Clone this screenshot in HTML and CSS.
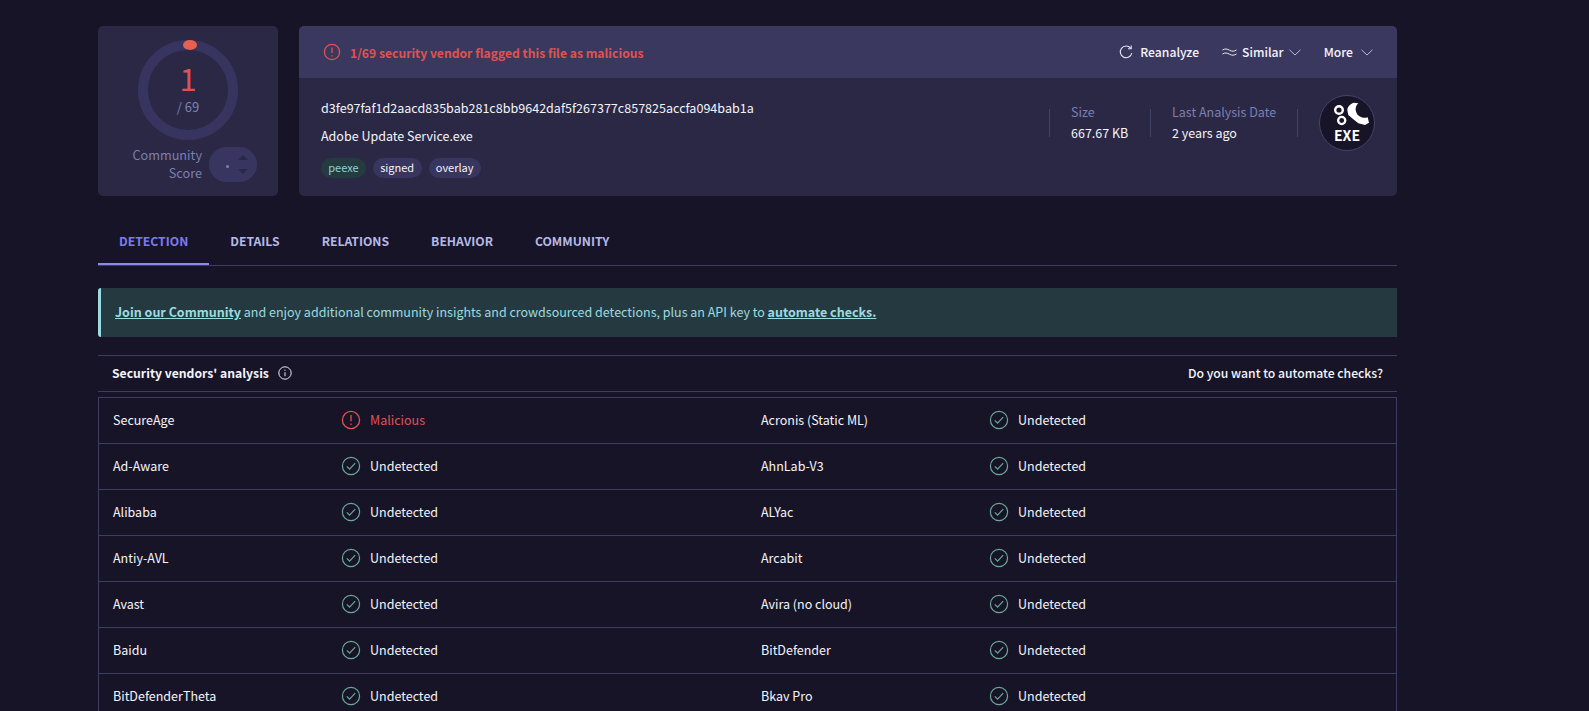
FILE: index.html
```html
<!DOCTYPE html>
<html lang="en">
<head>
  <meta charset="UTF-8" />
  <title>VirusTotal - File</title>
  <link rel="stylesheet" href="styles.css">
</head>
<body>
  <div class="page">

    <div class="summary">
      <div class="score-card">
        <div class="ring">
          <svg class="ring-svg" width="100" height="100" viewBox="0 0 100 100">
            <circle cx="50" cy="50" r="45" fill="none" stroke="#373560" stroke-width="10" />
            <ellipse cx="52" cy="5" rx="7" ry="5" fill="#e8604f" />
          </svg>
          <div class="ring-num">1</div>
          <div class="ring-total">/ 69</div>
        </div>
        <div class="community">
          <div class="community-label">Community<br>Score</div>
          <div class="community-pill">
            <span class="pill-dot"></span>
            <span class="pill-arrows">
              <svg width="10" height="19" viewBox="0 0 10 19">
                <path d="M0 5 5 0l5 5zM0 14l5 5 5-5z" />
              </svg>
            </span>
          </div>
        </div>
      </div>

      <div class="file-card">
        <div class="file-head">
          <div class="flag">
            <svg width="18" height="18" viewBox="0 0 18 18" fill="none" stroke="#e05252" stroke-width="1.3">
              <circle cx="9" cy="9" r="7.6" />
              <path d="M9 4.6v5.4M9 12.2v1.4" />
            </svg>
            <span>1/69 security vendor flagged this file as malicious</span>
          </div>
          <div class="actions">
            <a class="action action-re">
              <svg width="14" height="14" viewBox="0 0 14 14" fill="none" stroke="#e8e8f2" stroke-width="1.1">
                <path d="M11.6 3.2A5.8 5.8 0 1 0 12.8 8" />
                <path d="M12.2 .6v3.2H9" />
              </svg>
              <span>Reanalyze</span>
            </a>
            <a class="action action-sim">
              <svg width="15" height="10" viewBox="0 0 15 10" fill="none" stroke="#e8e8f2" stroke-width="1">
                <path d="M.5 3C3 1.500 5 1.800 7.500 3.200S12 4.500 14.500 3M.5 7C3 5.500 5 5.800 7.500 7.200S12 8.500 14.500 7" />
              </svg>
              <span>Similar</span>
              <svg class="chev" width="12" height="7" viewBox="0 0 12 7" fill="none" stroke="#b9b8d6" stroke-width="1">
                <path d="M.5 .8 6 6l5.5-5.2" />
              </svg>
            </a>
            <a class="action action-more">
              <span>More</span>
              <svg class="chev" width="12" height="7" viewBox="0 0 12 7" fill="none" stroke="#b9b8d6" stroke-width="1">
                <path d="M.5 .8 6 6l5.5-5.2" />
              </svg>
            </a>
          </div>
        </div>
        <div class="file-body">
          <div class="file-info">
            <div class="hash">d3fe97faf1d2aacd835bab281c8bb9642daf5f267377c857825accfa094bab1a</div>
            <div class="file-name">Adobe Update Service.exe</div>
            <div class="tags">
              <span class="tag tag-green">peexe</span>
              <span class="tag">signed</span>
              <span class="tag">overlay</span>
            </div>
          </div>
          <div class="meta meta-size">
            <div class="meta-label">Size</div>
            <div class="meta-value">667.67 KB</div>
          </div>
          <div class="meta meta-date">
            <div class="meta-label">Last Analysis Date</div>
            <div class="meta-value">2 years ago</div>
          </div>
          <div class="exe-wrap">
            <div class="exe">
              <svg width="46" height="24" viewBox="1324 102 46 24">
                <g fill="none" stroke="#fff">
                  <circle cx="1339" cy="110" r="3.800" stroke-width="2.400" />
                  <circle cx="1341.700" cy="120.500" r="3.600" stroke-width="2.300" />
                </g>
                <path d="M1353.300 102.700C1349.500 104.500 1347.300 107 1347.300 110L1348.300 115 1353.300 119.300 1358.300 123.300 1365 125 1369 122.700 1367.700 117.300C1365.500 118 1363.500 118 1361.700 117.300 1359 116.500 1357.300 115 1356.700 113.300 1355.700 111 1355.500 109.500 1355.700 108.300 1356 106 1357 104.500 1358.300 103.300z" fill="#fff" />
              </svg>
              <span class="exe-text">EXE</span>
            </div>
          </div>
        </div>
      </div>
    </div>

    <div class="tabs">
      <a class="tab active">DETECTION</a>
      <a class="tab">DETAILS</a>
      <a class="tab">RELATIONS</a>
      <a class="tab">BEHAVIOR</a>
      <a class="tab">COMMUNITY</a>
    </div>

    <div class="banner">
      <a class="banner-link">Join our Community</a>&nbsp;and enjoy additional community insights and crowdsourced detections, plus an API key to&nbsp;<a class="banner-link">automate checks.</a>
    </div>

    <div class="section-head">
      <div class="section-title">
        <span>Security vendors' analysis</span>
        <svg width="14" height="14" viewBox="0 0 14 14" fill="none" stroke="#e8e8f2" stroke-width="1">
          <circle cx="7" cy="7" r="6.2" />
          <path d="M7 6.200v4M7 3.600v1.200" />
        </svg>
      </div>
      <div class="section-link">Do you want to automate checks?</div>
    </div>

    <div class="vendors">
      <div class="vendor-row">
        <div class="vendor-name">SecureAge</div>
        <div class="vendor-status bad">
          <svg width="20" height="20" viewBox="0 0 20 20" fill="none" stroke="#e05252" stroke-width="1.3"><circle cx="10" cy="10" r="8.6" /><path d="M10 5v6.200M10 13.400V15" /></svg>
          <span>Malicious</span>
        </div>
        <div class="vendor-name">Acronis (Static ML)</div>
        <div class="vendor-status">
          <svg width="20" height="20" viewBox="0 0 20 20" fill="none" stroke="#6aa898" stroke-width="1.2"><circle cx="10" cy="10" r="8.6" /><path d="m5.800 10.400 2.800 2.800 5.600-6" /></svg>
          <span>Undetected</span>
        </div>
      </div>
      <div class="vendor-row">
        <div class="vendor-name">Ad-Aware</div>
        <div class="vendor-status">
          <svg width="20" height="20" viewBox="0 0 20 20" fill="none" stroke="#6aa898" stroke-width="1.2"><circle cx="10" cy="10" r="8.6" /><path d="m5.800 10.400 2.800 2.800 5.600-6" /></svg>
          <span>Undetected</span>
        </div>
        <div class="vendor-name">AhnLab-V3</div>
        <div class="vendor-status">
          <svg width="20" height="20" viewBox="0 0 20 20" fill="none" stroke="#6aa898" stroke-width="1.2"><circle cx="10" cy="10" r="8.6" /><path d="m5.800 10.400 2.800 2.800 5.600-6" /></svg>
          <span>Undetected</span>
        </div>
      </div>
      <div class="vendor-row">
        <div class="vendor-name">Alibaba</div>
        <div class="vendor-status">
          <svg width="20" height="20" viewBox="0 0 20 20" fill="none" stroke="#6aa898" stroke-width="1.2"><circle cx="10" cy="10" r="8.6" /><path d="m5.800 10.400 2.800 2.800 5.600-6" /></svg>
          <span>Undetected</span>
        </div>
        <div class="vendor-name">ALYac</div>
        <div class="vendor-status">
          <svg width="20" height="20" viewBox="0 0 20 20" fill="none" stroke="#6aa898" stroke-width="1.2"><circle cx="10" cy="10" r="8.6" /><path d="m5.800 10.400 2.800 2.800 5.600-6" /></svg>
          <span>Undetected</span>
        </div>
      </div>
      <div class="vendor-row">
        <div class="vendor-name">Antiy-AVL</div>
        <div class="vendor-status">
          <svg width="20" height="20" viewBox="0 0 20 20" fill="none" stroke="#6aa898" stroke-width="1.2"><circle cx="10" cy="10" r="8.6" /><path d="m5.800 10.400 2.800 2.800 5.600-6" /></svg>
          <span>Undetected</span>
        </div>
        <div class="vendor-name">Arcabit</div>
        <div class="vendor-status">
          <svg width="20" height="20" viewBox="0 0 20 20" fill="none" stroke="#6aa898" stroke-width="1.2"><circle cx="10" cy="10" r="8.6" /><path d="m5.800 10.400 2.800 2.800 5.600-6" /></svg>
          <span>Undetected</span>
        </div>
      </div>
      <div class="vendor-row">
        <div class="vendor-name">Avast</div>
        <div class="vendor-status">
          <svg width="20" height="20" viewBox="0 0 20 20" fill="none" stroke="#6aa898" stroke-width="1.2"><circle cx="10" cy="10" r="8.6" /><path d="m5.800 10.400 2.800 2.800 5.600-6" /></svg>
          <span>Undetected</span>
        </div>
        <div class="vendor-name">Avira (no cloud)</div>
        <div class="vendor-status">
          <svg width="20" height="20" viewBox="0 0 20 20" fill="none" stroke="#6aa898" stroke-width="1.2"><circle cx="10" cy="10" r="8.6" /><path d="m5.800 10.400 2.800 2.800 5.600-6" /></svg>
          <span>Undetected</span>
        </div>
      </div>
      <div class="vendor-row">
        <div class="vendor-name">Baidu</div>
        <div class="vendor-status">
          <svg width="20" height="20" viewBox="0 0 20 20" fill="none" stroke="#6aa898" stroke-width="1.2"><circle cx="10" cy="10" r="8.6" /><path d="m5.800 10.400 2.800 2.800 5.600-6" /></svg>
          <span>Undetected</span>
        </div>
        <div class="vendor-name">BitDefender</div>
        <div class="vendor-status">
          <svg width="20" height="20" viewBox="0 0 20 20" fill="none" stroke="#6aa898" stroke-width="1.2"><circle cx="10" cy="10" r="8.6" /><path d="m5.800 10.400 2.800 2.800 5.600-6" /></svg>
          <span>Undetected</span>
        </div>
      </div>
      <div class="vendor-row">
        <div class="vendor-name">BitDefenderTheta</div>
        <div class="vendor-status">
          <svg width="20" height="20" viewBox="0 0 20 20" fill="none" stroke="#6aa898" stroke-width="1.2"><circle cx="10" cy="10" r="8.6" /><path d="m5.800 10.400 2.800 2.800 5.600-6" /></svg>
          <span>Undetected</span>
        </div>
        <div class="vendor-name">Bkav Pro</div>
        <div class="vendor-status">
          <svg width="20" height="20" viewBox="0 0 20 20" fill="none" stroke="#6aa898" stroke-width="1.2"><circle cx="10" cy="10" r="8.6" /><path d="m5.800 10.400 2.800 2.800 5.600-6" /></svg>
          <span>Undetected</span>
        </div>
      </div>
    </div>

  </div>
</body>
</html>
```

FILE: styles.css
```css
html, body {
  margin: 0;
  padding: 0;
  height: 711px;
  overflow: hidden;
  background-color: #171428;
  color: #f4f4fa;
  font-family: "Noto Sans CJK JP", "Noto Sans", sans-serif;
  font-size: 12.5px;
}

.page {
  width: 1299px;
  margin-left: 98px;
  padding-top: 26px;
}

.summary {
  display: flex;
  gap: 21px;
  height: 170px;
}

.score-card {
  width: 180px;
  flex-shrink: 0;
  background-color: #2a2845;
  border-radius: 5px;
  display: flex;
  flex-direction: column;
  align-items: center;
  padding-top: 14px;
  box-sizing: border-box;
}

.ring {
  position: relative;
  width: 100px;
  height: 100px;
  text-align: center;
}

.ring-svg {
  position: absolute;
  left: 0;
  top: 0;
}

.ring-num {
  padding-top: 20px;
  font-size: 31px;
  line-height: 36px;
  color: #e05252;
}

.ring-total {
  margin-top: 2px;
  font-size: 13px;
  line-height: 18px;
  color: #7d7fb2;
}

.community {
  display: flex;
  align-items: center;
  gap: 7px;
  margin-top: 7px;
  width: 100%;
  padding-left: 12px;
  box-sizing: border-box;
  justify-content: flex-start;
}

.community-label {
  width: 92px;
  text-align: right;
  color: #7d7fb2;
  font-size: 12.7px;
  line-height: 18px;
  margin-top: -1px;
}

.community-pill {
  width: 48px;
  height: 35px;
  border-radius: 18px;
  background-color: #383660;
  display: flex;
  align-items: center;
  justify-content: flex-end;
  gap: 9px;
  padding-right: 9px;
  box-sizing: border-box;
}

.pill-dot {
  width: 3px;
  height: 3px;
  border-radius: 50%;
  background-color: #7d7fb2;
  margin-top: 3px;
}

.pill-arrows {
  display: flex;
}

.pill-arrows path {
  fill: #2a2845;
}

.file-card {
  flex: 1;
  background-color: #2a2845;
  border-radius: 5px;
  overflow: hidden;
}

.file-head {
  height: 52px;
  background-color: #3a385e;
  display: flex;
  align-items: center;
  justify-content: space-between;
  padding: 0 24px 0 24px;
}

.flag {
  display: flex;
  align-items: center;
  gap: 9px;
  color: #e05252;
  font-weight: 700;
  font-size: 12.15px;
}

.actions {
  display: flex;
  align-items: center;
  gap: 23px;
  font-size: 12.2px;
}

.action {
  display: flex;
  align-items: center;
  gap: 5px;
  font-weight: 500;
}

.action-re {
  gap: 7px;
}

.action-more {
  gap: 8px;
}

.file-body {
  display: flex;
  align-items: flex-start;
  height: 118px;
  padding: 0 22px;
  position: relative;
}

.file-info {
  flex: 1;
  padding-top: 20px;
}

.hash {
  line-height: 20px;
  font-size: 12.55px;
}

.file-name {
  margin-top: 8px;
  line-height: 20px;
}

.tags {
  display: flex;
  gap: 7px;
  margin-top: 12px;
}

.tag {
  height: 20px;
  line-height: 19px;
  padding: 0 7.3px;
  border-radius: 10px;
  background-color: #38365e;
  font-size: 11px;
}

.tag-green {
  background-color: #243b40;
  color: #8ed4dc;
}

.meta {
  margin-top: 31px;
  height: 28px;
  border-left: 1px solid #44436a;
  padding-left: 21px;
}

.meta-size {
  width: 79px;
}

.meta-date {
  width: 125px;
}

.meta-label {
  color: #7d7fb2;
  line-height: 18px;
  margin-top: -6px;
}

.meta-value {
  line-height: 20px;
  margin-top: 2px;
}

.exe-wrap {
  margin-top: 31px;
  height: 28px;
  border-left: 1px solid #44436a;
  padding-left: 21px;
}

.exe {
  margin-top: -14px;
  width: 56px;
  height: 56px;
  box-sizing: border-box;
  border-radius: 50%;
  background-color: #171428;
  border: 1px solid #44436a;
  display: flex;
  flex-direction: column;
  align-items: center;
  padding-top: 6px;
}

.exe-text {
  font-size: 14px;
  font-weight: 700;
  line-height: 14px;
  color: #fff;
  margin-top: 2px;
}

.tabs {
  display: flex;
  margin-top: 24px;
  height: 46px;
  box-sizing: border-box;
  border-bottom: 1px solid #3e3c62;
}

.tab {
  padding: 0 21px;
  line-height: 42px;
  font-size: 12.2px;
  font-weight: 700;
  color: #b5b9e6;
  height: 45px;
  box-sizing: border-box;
}

.active {
  color: #7d7bf0;
  border-bottom: 2px solid #8a88f0;
}

.banner {
  margin-top: 22px;
  height: 49px;
  line-height: 48px;
  box-sizing: border-box;
  padding-left: 14px;
  background-color: #253a40;
  border-left: 3px solid #9cdbe0;
  border-radius: 3px 0 0 3px;
  color: #9cdbe0;
}

.banner-link {
  font-weight: 700;
  text-decoration: underline;
}

.section-head {
  margin-top: 18px;
  height: 37px;
  box-sizing: border-box;
  border-top: 1px solid #3e3c62;
  border-bottom: 1px solid #3e3c62;
  display: flex;
  align-items: center;
  justify-content: space-between;
  padding: 0 14px 2px;
}

.section-title {
  display: flex;
  align-items: center;
  gap: 9px;
  font-weight: 700;
  font-size: 12.2px;
}

.section-link {
  font-weight: 500;
  font-size: 12.2px;
}

.vendors {
  margin-top: 5px;
  border: 1px solid #3e3c62;
  border-bottom: none;
}

.vendor-row {
  display: grid;
  grid-template-columns: 242px 406px 242px 1fr;
  height: 46px;
  box-sizing: border-box;
  border-bottom: 1px solid #3e3c62;
  align-items: center;
  padding-bottom: 2px;
}

.vendor-name {
  padding-left: 14px;
}

.vendor-status {
  display: flex;
  align-items: center;
  gap: 9px;
}

.bad {
  color: #e05252;
}
```
